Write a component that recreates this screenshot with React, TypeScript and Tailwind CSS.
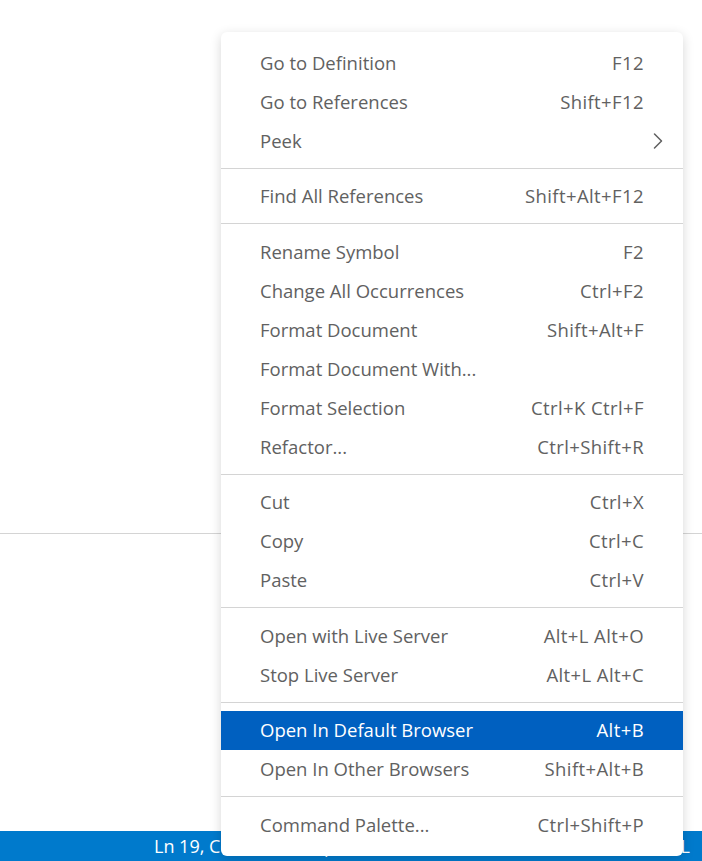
import { ChevronRight } from 'lucide-react'

type Item = { label: string; keys?: string; submenu?: boolean; active?: boolean }

const GROUPS: Item[][] = [
  [
    { label: 'Go to Definition', keys: 'F12' },
    { label: 'Go to References', keys: 'Shift+F12' },
    { label: 'Peek', submenu: true },
  ],
  [{ label: 'Find All References', keys: 'Shift+Alt+F12' }],
  [
    { label: 'Rename Symbol', keys: 'F2' },
    { label: 'Change All Occurrences', keys: 'Ctrl+F2' },
    { label: 'Format Document', keys: 'Shift+Alt+F' },
    { label: 'Format Document With...' },
    { label: 'Format Selection', keys: 'Ctrl+K Ctrl+F' },
    { label: 'Refactor...', keys: 'Ctrl+Shift+R' },
  ],
  [
    { label: 'Cut', keys: 'Ctrl+X' },
    { label: 'Copy', keys: 'Ctrl+C' },
    { label: 'Paste', keys: 'Ctrl+V' },
  ],
  [
    { label: 'Open with Live Server', keys: 'Alt+L Alt+O' },
    { label: 'Stop Live Server', keys: 'Alt+L Alt+C' },
  ],
  [
    { label: 'Open In Default Browser', keys: 'Alt+B', active: true },
    { label: 'Open In Other Browsers', keys: 'Shift+Alt+B' },
  ],
  [{ label: 'Command Palette...', keys: 'Ctrl+Shift+P' }],
]

function MenuRow({ item }: { item: Item }) {
  return (
    <div
      className={`flex items-center justify-between h-[39px] pl-[39px] pr-[39px] ${
        item.active ? 'bg-[#0060c0] text-white' : 'text-[#616161]'
      }`}
    >
      <span>{item.label}</span>
      {item.keys && <span className="tracking-[0.4px]">{item.keys}</span>}
      {item.submenu && (
        <ChevronRight className="w-[28px] h-[28px] -mr-[28px] text-[#616161]" strokeWidth={1.3} />
      )}
    </div>
  )
}

export default function App() {
  return (
    <div
      className="relative w-[702px] h-[861px] bg-white flex flex-col overflow-hidden"
      style={{ fontFamily: '"Open Sans", "Noto Sans", sans-serif' }}
    >
      {/* editor */}
      <div className="h-[534px] border-b border-[#d4d4d4]" />
      {/* panel */}
      <div className="flex-1" />
      {/* status bar */}
      <div className="h-[30px] bg-[#007acc] text-white text-[18px] flex items-center justify-between pl-[154px] pr-[12px]">
        <span>Ln 19, Col 25</span>
        <span>Spaces: 2</span>
        <span>UTF-8</span>
        <span>CRLF</span>
        <span>HTML</span>
      </div>

      {/* context menu */}
      <div className="absolute left-[221px] top-[32px] w-[462px] bg-white rounded-[6px] pt-[11px] pb-[12px] text-[18.5px] shadow-[0_3px_12px_rgba(0,0,0,0.16)]">
        {GROUPS.map((group, gi) => (
          <div key={gi}>
            {gi > 0 && (
              <div className="h-[16.5px] flex items-center">
                <div className="w-full h-px bg-[#d4d4d4]" />
              </div>
            )}
            {group.map(item => (
              <MenuRow key={item.label} item={item} />
            ))}
          </div>
        ))}
      </div>
    </div>
  )
}
